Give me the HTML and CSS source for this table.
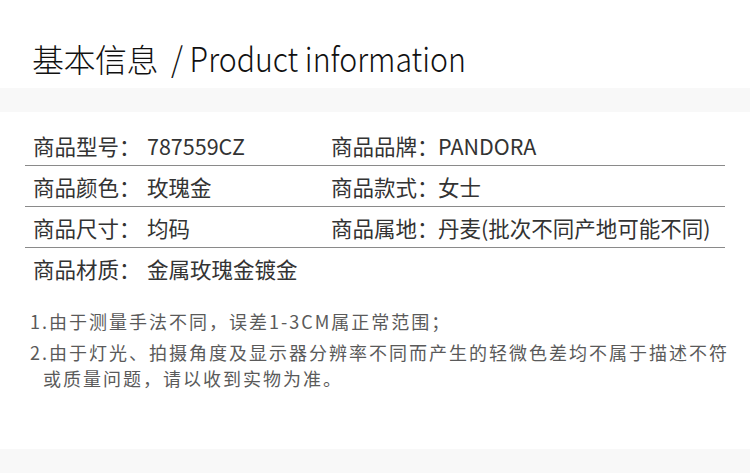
FILE: index.html
```html
<!DOCTYPE html>
<html lang="zh-CN">
<head>
  <meta charset="UTF-8">
  <title>基本信息</title>
  <link rel="stylesheet" href="styles.css">
</head>
<body>

  <div class="header">
    <h2 class="title">基本信息 <span class="title-en">/ Product information</span></h2>
  </div>
  <div class="band"></div>

  <div class="info">
    <div class="row">
      <span class="label">商品型号：</span><span class="value">787559CZ</span>
      <span class="label">商品品牌：</span><span class="value">PANDORA</span>
    </div>
    <div class="row">
      <span class="label">商品颜色：</span><span class="value">玫瑰金</span>
      <span class="label">商品款式：</span><span class="value">女士</span>
    </div>
    <div class="row">
      <span class="label">商品尺寸：</span><span class="value">均码</span>
      <span class="label">商品属地：</span><span class="value">丹麦(批次不同产地可能不同)</span>
    </div>
    <div class="row last">
      <span class="label">商品材质：</span><span class="value">金属玫瑰金镀金</span>
    </div>
  </div>

  <div class="notes">
    <p>1.由于测量手法不同，误差1-3CM属正常范围；</p>
    <p>2.由于灯光、拍摄角度及显示器分辨率不同而产生的轻微色差均不属于描述不符或质量问题，请以收到实物为准。</p>
  </div>

  <div class="band bottom"></div>

</body>
</html>
```

FILE: styles.css
```css
body {
  margin: 0;
  background: white;
  font-family: "Noto Sans CJK SC", sans-serif;
  color: #222;
}
.header {
  height: 88px;
  display: flex;
  align-items: center;
  padding: 0 32px;
  box-sizing: border-box;
}
.title {
  margin: 0;
  padding-top: 26px;
  font-size: 32px;
  font-weight: 300;
  color: #111;
  letter-spacing: -0.5px;
  white-space: nowrap;
}
.title-en {
  display: inline-block;
  font-size: 34px;
  font-weight: 300;
  margin-left: 6px;
  letter-spacing: 0;
  transform: scaleX(0.89);
  transform-origin: left center;
}
.band {
  height: 24px;
  background: #f8f8f8;
}
.band.bottom {
  height: 25px;
  margin-top: 58px;
}
.info {
  margin: 13px 25px 0;
}
.row {
  display: grid;
  grid-template-columns: 114px 184px 107px 1fr;
  align-items: center;
  height: 40px;
  padding-left: 8px;
  border-bottom: 1px solid #8a8a8a;
  font-size: 21.5px;
  color: #333;
}
.row.last {
  border-bottom: none;
}
.label, .value {
  white-space: nowrap;
}
.notes {
  padding: 20px 8px 0 30px;
  font-size: 18px;
  letter-spacing: 2px;
  color: #5a5a5a;
}
.notes p {
  margin: 0 0 5px;
  line-height: 26px;
  padding-left: 13px;
  text-indent: -13px;
}
```
